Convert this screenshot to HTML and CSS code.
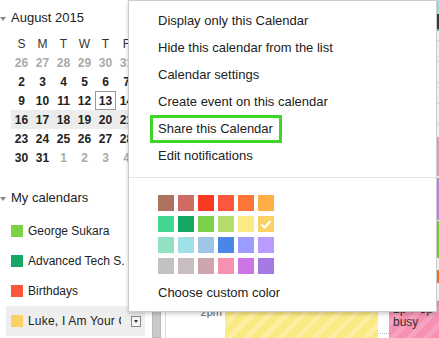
FILE: index.html
```html
<!DOCTYPE html>
<html lang="en">
<head>
  <meta charset="UTF-8" />
  <title>Calendar - Share menu</title>
  <link rel="stylesheet" href="styles.css">
</head>
<body>
  <div class="app">
    <aside class="sidebar">
      <div class="section-head"><span class="caret"></span>August 2015</div>
      <table class="mini">
        <thead>
          <tr><th>S</th><th>M</th><th>T</th><th>W</th><th>T</th><th>F</th><th>S</th></tr>
        </thead>
        <tbody>
          <tr><td class="other">26</td><td class="other">27</td><td class="other">28</td><td class="other">29</td><td class="other">30</td><td class="other">31</td><td>1</td></tr>
          <tr><td>2</td><td>3</td><td>4</td><td>5</td><td>6</td><td>7</td><td>8</td></tr>
          <tr><td>9</td><td>10</td><td>11</td><td>12</td><td class="today">13</td><td>14</td><td>15</td></tr>
          <tr class="week"><td>16</td><td>17</td><td>18</td><td>19</td><td>20</td><td>21</td><td>22</td></tr>
          <tr><td>23</td><td>24</td><td>25</td><td>26</td><td>27</td><td>28</td><td>29</td></tr>
          <tr><td>30</td><td>31</td><td class="other">1</td><td class="other">2</td><td class="other">3</td><td class="other">4</td><td class="other">5</td></tr>
        </tbody>
      </table>

      <div class="section-head cals-head"><span class="caret"></span>My calendars</div>
      <ul class="cal-list">
        <li><span class="chip lime"></span><span class="cal-name">George Sukara</span></li>
        <li><span class="chip green"></span><span class="cal-name">Advanced Tech S.</span></li>
        <li><span class="chip red"></span><span class="cal-name">Birthdays</span></li>
        <li class="active"><span class="chip yellow"></span><span class="cal-name short">Luke, I Am Your Calendar</span><span class="drop"></span></li>
      </ul>
    </aside>

    <div class="scroll"><div class="thumb"></div></div>

    <main class="grid">
      <div class="times"><span>2pm</span></div>
      <div class="day day-a"><div class="event striped-yellow"></div></div>
      <div class="day-gap"></div>
      <div class="day day-b">
        <div class="blk head"></div>
        <div class="blk hours">
          <div class="hr-line"></div><div class="hr-line"></div><div class="hr-line"></div><div class="hr-line"></div><div class="hr-line"></div>
        </div>
        <div class="blk ev pink-soft"></div>
        <div class="blk ev purple"></div>
        <div class="blk ev lime-ev"></div>
        <div class="blk spacer"></div>
        <div class="blk ev orange"></div>
        <div class="blk spacer2"></div>
        <div class="event striped-pink">
          <div>2p – 5p</div>
          <div>busy</div>
        </div>
      </div>
    </main>
  </div>

  <div class="menu">
    <div class="menu-item">Display only this Calendar</div>
    <div class="menu-item">Hide this calendar from the list</div>
    <div class="menu-item">Calendar settings</div>
    <div class="menu-item">Create event on this calendar</div>
    <div class="menu-item share">Share this Calendar</div>
    <div class="menu-item after-share">Edit notifications</div>
    <div class="menu-sep"></div>
    <div class="swatches">
      <span class="sw" data-c="ac725e"></span>
      <span class="sw" data-c="d06b64"></span>
      <span class="sw" data-c="f83a22"></span>
      <span class="sw" data-c="fa573c"></span>
      <span class="sw" data-c="ff7537"></span>
      <span class="sw" data-c="ffad46"></span>
      <span class="sw" data-c="42d692"></span>
      <span class="sw" data-c="16a765"></span>
      <span class="sw" data-c="7bd148"></span>
      <span class="sw" data-c="b3dc6c"></span>
      <span class="sw" data-c="fbe983"></span>
      <span class="sw" data-c="fad165"><svg viewBox="0 0 16 16" width="16" height="16"><polyline points="3.5,8.5 6.5,11.5 12.5,5" fill="none" stroke="#fff" stroke-width="2"/></svg></span>
      <span class="sw" data-c="92e1c0"></span>
      <span class="sw" data-c="9fe1e7"></span>
      <span class="sw" data-c="9fc6e7"></span>
      <span class="sw" data-c="4986e7"></span>
      <span class="sw" data-c="9a9cff"></span>
      <span class="sw" data-c="b99aff"></span>
      <span class="sw" data-c="c2c2c2"></span>
      <span class="sw" data-c="cabdbf"></span>
      <span class="sw" data-c="cca6ac"></span>
      <span class="sw" data-c="f691b2"></span>
      <span class="sw" data-c="cd74e6"></span>
      <span class="sw" data-c="a47ae2"></span>
    </div>
    <div class="menu-item custom">Choose custom color</div>
  </div>
</body>
</html>
```

FILE: styles.css
```css
/* Base */
* {
  box-sizing: border-box;
}

html, body {
  margin: 0;
  overflow: hidden;
}

body {
  font-family: "Liberation Sans", Arial, sans-serif;
  color: #222;
  background: #fff;
}

.app {
  display: flex;
  width: 439px;
  height: 338px;
}

/* Sidebar */
.sidebar {
  width: 145px;
  flex: none;
  font-size: 13px;
}

.section-head {
  padding: 8px 0 6px;
  line-height: 20px;
  font-size: 13px;
  color: #222;
}

.caret {
  display: inline-block;
  width: 0;
  height: 0;
  border-left: 3px solid transparent;
  border-right: 3px solid transparent;
  border-top: 4px solid #888;
  margin-right: 5px;
  vertical-align: middle;
}

.mini {
  margin-left: 11px;
  width: 147px;
  table-layout: fixed;
  border-collapse: collapse;
  border-spacing: 0;
  font-size: 12px;
}

.mini th,
.mini td {
  width: 21px;
  height: 19px;
  padding: 0;
  text-align: center;
}

.mini th {
  font-weight: normal;
  color: #333;
}

.mini td {
  font-weight: bold;
  color: #222;
}

.mini td.other {
  color: #aaa;
}

.mini tr.week td {
  background: #ececec;
}

.mini td.today {
  box-shadow: inset 0 0 0 1px #999;
}

.cals-head {
  margin-top: 21px;
  padding: 0;
}

.cal-list {
  list-style: none;
  margin: 8px 0 0;
  padding: 0;
  font-size: 12px;
}

.cal-list li {
  display: flex;
  align-items: center;
  height: 30px;
  width: 139px;
  margin-left: 6px;
  padding-left: 5px;
}

.cal-list li.active {
  background: #eee;
}

.chip {
  width: 12px;
  height: 12px;
  margin-right: 5px;
  flex: none;
}

.chip.lime { background: #7bd148; }
.chip.green { background: #16a765; }
.chip.red { background: #fa573c; }
.chip.yellow { background: #fad165; }

.cal-name {
  width: 99px;
  white-space: nowrap;
  overflow: hidden;
  flex: none;
}

.cal-name.short {
  width: 93px;
  letter-spacing: 0.2px;
}

.drop {
  width: 10px;
  height: 11px;
  margin-left: 10px;
  border: 1px solid #888;
  background: #f4f4f4;
  position: relative;
  flex: none;
}

.drop::after {
  content: "";
  position: absolute;
  left: 2px;
  top: 3px;
  border-left: 2px solid transparent;
  border-right: 2px solid transparent;
  border-top: 3px solid #333;
}

/* Scroll + grid behind the menu */
.scroll {
  width: 20px;
  flex: none;
}

.thumb {
  margin-left: 7px;
  width: 9px;
  height: 100%;
  background: #c9c9c9;
  border: 1px solid #bbb;
}

.grid {
  flex: 1;
  display: flex;
  border-left: 1px solid #ddd;
  min-width: 0;
}

.times {
  width: 59px;
  flex: none;
  padding-top: 305px;
  padding-right: 3px;
  text-align: right;
  font-size: 11px;
  line-height: 14px;
  color: #666;
}

.day-a {
  width: 153px;
  flex: none;
  display: flex;
  flex-direction: column;
  justify-content: flex-end;
}

.event {
  font-size: 12px;
  line-height: 13px;
  color: #333;
}

.striped-yellow {
  height: 50px;
  background: repeating-linear-gradient(-45deg, #fbe983 0 7px, #fcefa3 7px 12px);
}

.day-gap {
  width: 11px;
  flex: none;
  padding-top: 333px;
}

.day-gap::before {
  content: "";
  display: block;
  border-top: 1px dotted #bbb;
}

.day-b {
  flex: 1;
  display: flex;
  flex-direction: column;
}

.blk.head {
  height: 31px;
  background: #9fe1e7;
  border-top: 14px solid #a8e3e8;
  border-bottom: 2px solid #6cc6cf;
  box-shadow: inset 0 0 0 20px #3b3b3b;
}

.blk.hours {
  height: 106px;
  padding-top: 9px;
}

.hr-line {
  height: 21px;
  border-top: 1px solid #e3e3e3;
}

.blk.ev { flex: none; }
.pink-soft { height: 39px; background: #f2a6c0; margin-bottom: 2px; }
.purple { height: 42px; background: #c98be3; margin-bottom: 1px; }
.lime-ev { height: 37px; background: #7bd148; }
.spacer { height: 12px; }
.orange { height: 13px; background: #ff7537; }
.spacer2 { height: 18px; border-bottom: 1px solid #e3e3e3; }

.striped-pink {
  flex: 1;
  padding: 2px 0 0 4px;
  background: repeating-linear-gradient(-45deg, #f691b2 0 7px, #f7a2bf 7px 12px);
}

/* Popup menu */
.menu {
  position: absolute;
  left: 128px;
  top: 0;
  width: 309px;
  height: 312px;
  padding-top: 6px;
  background: #fff;
  border: 1px solid #ccc;
  box-shadow: 0 2px 4px rgba(0, 0, 0, 0.2);
  font-size: 13px;
  color: #222;
}

.menu-item {
  line-height: 27px;
  padding-left: 29px;
  white-space: nowrap;
}

.menu-item.share {
  margin-left: 21px;
  width: 132px;
  padding-left: 5px;
  line-height: 22px;
  border: 3px solid #3fd62a;
}

.menu-item.after-share {
  margin-top: -1px;
}

.menu-sep {
  margin-top: 8px;
  border-top: 1px solid #e5e5e5;
}

.swatches {
  display: grid;
  grid-template-columns: repeat(6, 16px);
  grid-auto-rows: 16px;
  column-gap: 4px;
  row-gap: 5px;
  margin: 17px 0 0 29px;
}

.sw { display: block; }
.sw svg { display: block; }

.sw[data-c="ac725e"] { background: #ac725e; }
.sw[data-c="d06b64"] { background: #d06b64; }
.sw[data-c="f83a22"] { background: #f83a22; }
.sw[data-c="fa573c"] { background: #fa573c; }
.sw[data-c="ff7537"] { background: #ff7537; }
.sw[data-c="ffad46"] { background: #ffad46; }
.sw[data-c="42d692"] { background: #42d692; }
.sw[data-c="16a765"] { background: #16a765; }
.sw[data-c="7bd148"] { background: #7bd148; }
.sw[data-c="b3dc6c"] { background: #b3dc6c; }
.sw[data-c="fbe983"] { background: #fbe983; }
.sw[data-c="fad165"] { background: #fad165; }
.sw[data-c="92e1c0"] { background: #92e1c0; }
.sw[data-c="9fe1e7"] { background: #9fe1e7; }
.sw[data-c="9fc6e7"] { background: #9fc6e7; }
.sw[data-c="4986e7"] { background: #4986e7; }
.sw[data-c="9a9cff"] { background: #9a9cff; }
.sw[data-c="b99aff"] { background: #b99aff; }
.sw[data-c="c2c2c2"] { background: #c2c2c2; }
.sw[data-c="cabdbf"] { background: #cabdbf; }
.sw[data-c="cca6ac"] { background: #cca6ac; }
.sw[data-c="f691b2"] { background: #f691b2; }
.sw[data-c="cd74e6"] { background: #cd74e6; }
.sw[data-c="a47ae2"] { background: #a47ae2; }

.menu-item.custom {
  margin-top: 5px;
}
```
